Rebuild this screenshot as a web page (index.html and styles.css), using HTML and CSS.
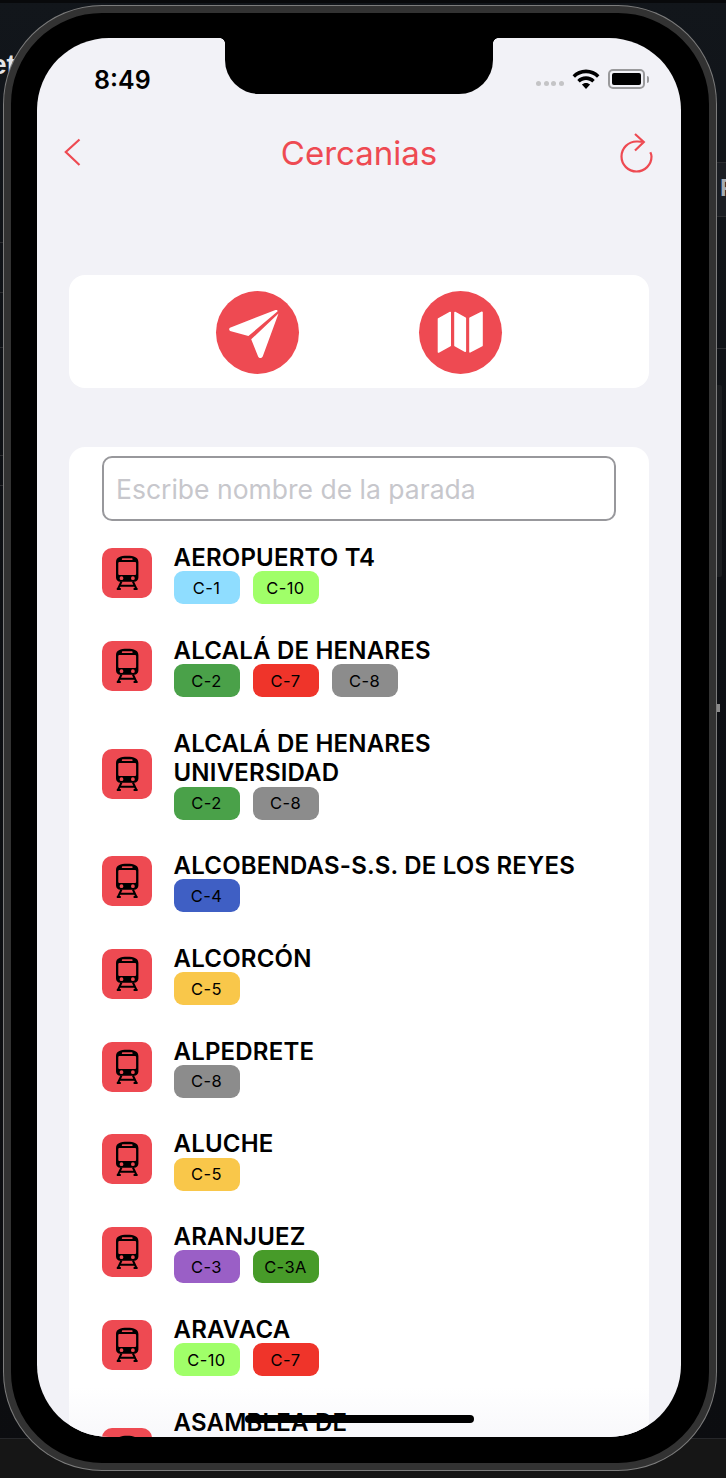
FILE: index.html
```html
<!DOCTYPE html>
<html lang="es">
<head>
<meta charset="utf-8">
<title>Cercanias</title>
<link rel="stylesheet" href="styles.css">
</head>
<body>
<svg class="defs" width="0" height="0" aria-hidden="true">
  <symbol id="train" viewBox="0 0 50 50">
    <path fill="#000" fill-rule="evenodd" d="M25.200 7.800c-7 0-11.200 1.700-11.200 6.200v15.500c0 2.500 1.900 4.300 4.300 4.300h13.800c2.400 0 4.300-1.800 4.300-4.300V14c0-4.500-4.200-6.200-11.200-6.200zM20.800 10.300h8.800c.6 0 1 .4 1 .9s-.4 .9-1 .9h-8.800c-.6 0-1-.4-1-.9s.4-.9 1-.9zM17.600 14h15.200c.8 0 1.300.5 1.300 1.300v10.400c0 .8-.5 1.300-1.300 1.300H17.600c-.8 0-1.300-.5-1.300-1.300V15.300c0-.8.500-1.300 1.300-1.300zM19.500 28.300a1.900 1.900 0 1 1 0 3.800 1.900 1.900 0 0 1 0-3.800zm11.400 0a1.900 1.900 0 1 1 0 3.800 1.900 1.900 0 0 1 0-3.800z"/>
    <path fill="none" stroke="#000" stroke-width="2" d="M19.500 33.500 15.800 41.200M30.900 33.500l3.700 7.700M17.500 37.800h15.400M14.800 41h4M31.600 41h4"/>
  </symbol>
</svg>
<div class="backdrop" aria-hidden="true">
  <span class="bg-text">et</span>
  <span class="bg-tab">P</span>
  <i class="rule rule-l1"></i><i class="rule rule-l2"></i><i class="rule rule-l3"></i><i class="rule rule-l4"></i><i class="rule rule-l5"></i>
  <i class="rule rule-r1"></i><i class="rule rule-r2"></i><i class="rule rule-r3"></i>
  <i class="side-box"></i><i class="side-tick"></i><i class="bottom-band"></i>
</div>
<div class="phone">
  <main class="screen">
    <div class="status">
      <span class="time">8:49</span>
      <div class="status-icons">
        <span class="dots"><i></i><i></i><i></i><i></i></span>
        <svg class="wifi" width="28" height="21" viewBox="1 1.500 26 19.500"><path d="M14 2C9 2 4.700 4 1.500 7.200l2.300 2.400C6.400 7 10 5.500 14 5.500s7.600 1.500 10.200 4.100l2.300-2.400C23.300 4 19 2 14 2zm0 6.300c-3.200 0-6 1.200-8.100 3.300l2.300 2.400c1.500-1.500 3.500-2.300 5.800-2.300s4.300.8 5.800 2.300l2.300-2.400C20 9.500 17.200 8.300 14 8.300zm0 6.200c-1.500 0-2.800.6-3.800 1.500l3.800 4 3.800-4c-1-.9-2.300-1.500-3.800-1.500z"/></svg>
        <span class="battery"><b></b></span><span class="battery-cap"></span>
      </div>
    </div>
    <header class="nav">
      <svg class="back" width="18" height="28" viewBox="0 0 18 28"><path d="M16.500 1.500 2.800 14 16.500 27"/></svg>
      <h1>Cercanias</h1>
      <svg class="reload" width="34" height="42" viewBox="0 0 34 42"><path d="M23.500 10C21 9.400 19 9.500 16.500 9.500A15 15 0 1 0 31.500 24.500c0-1.300-.6-3-1.200-4.200M15 2l8.800 8L15 18.500"/></svg>
    </header>
    <section class="card actions">
      <button class="round" aria-label="Ubicación">
        <svg width="83" height="83" viewBox="0 0 83 83"><path d="M58.800 19.300c2-.8 3.200.2 2.600 1.300L32.400 45.100 15 40.300c-2.400-.7-2.400-3.100-.4-3.900L58.800 19.300zM62.500 22.500 46.800 65.300c-.8 2.400-4.100 2.400-4.800 0L35.200 48.300 62.500 22.500z"/></svg>
      </button>
      <button class="round" aria-label="Mapa">
        <svg class="map" width="83" height="83" viewBox="0 0 83 83"><path d="M19.500 28 31.200 21.500v33L19.500 61zM36 21.500l10.300 5.800v33L36 54.500zM51 27.300l12-6v33.200L51 60.800z"/></svg>
      </button>
    </section>
    <section class="card list">
      <div class="search">Escribe nombre de la parada</div>
      <ul class="stops">
        <li class="stop"><span class="icon"><svg width="50" height="50"><use href="#train"/></svg></span><div><h2>AEROPUERTO T4</h2><p class="lines"><span class="line c1">C-1</span><span class="line c10">C-10</span></p></div></li>
        <li class="stop"><span class="icon"><svg width="50" height="50"><use href="#train"/></svg></span><div><h2>ALCALÁ DE HENARES</h2><p class="lines"><span class="line c2">C-2</span><span class="line c7">C-7</span><span class="line c8">C-8</span></p></div></li>
        <li class="stop"><span class="icon"><svg width="50" height="50"><use href="#train"/></svg></span><div><h2>ALCALÁ DE HENARES<br>UNIVERSIDAD</h2><p class="lines"><span class="line c2">C-2</span><span class="line c8">C-8</span></p></div></li>
        <li class="stop"><span class="icon"><svg width="50" height="50"><use href="#train"/></svg></span><div><h2>ALCOBENDAS-S.S. DE LOS REYES</h2><p class="lines"><span class="line c4">C-4</span></p></div></li>
        <li class="stop"><span class="icon"><svg width="50" height="50"><use href="#train"/></svg></span><div><h2>ALCORCÓN</h2><p class="lines"><span class="line c5">C-5</span></p></div></li>
        <li class="stop"><span class="icon"><svg width="50" height="50"><use href="#train"/></svg></span><div><h2>ALPEDRETE</h2><p class="lines"><span class="line c8">C-8</span></p></div></li>
        <li class="stop"><span class="icon"><svg width="50" height="50"><use href="#train"/></svg></span><div><h2>ALUCHE</h2><p class="lines"><span class="line c5">C-5</span></p></div></li>
        <li class="stop"><span class="icon"><svg width="50" height="50"><use href="#train"/></svg></span><div><h2>ARANJUEZ</h2><p class="lines"><span class="line c3">C-3</span><span class="line c3a">C-3A</span></p></div></li>
        <li class="stop"><span class="icon"><svg width="50" height="50"><use href="#train"/></svg></span><div><h2>ARAVACA</h2><p class="lines"><span class="line c10">C-10</span><span class="line c7">C-7</span></p></div></li>
        <li class="stop stop-last"><span class="icon"><svg width="50" height="50"><use href="#train"/></svg></span><div><h2>ASAMBLEA DE</h2></div></li>
      </ul>
    </section>
    <div class="home"></div>
  </main>
</div>
</body>
</html>
```
FILE: styles.css
```css
* { box-sizing: border-box; }
html, body { margin: 0; height: 1478px; overflow: hidden; }
body { position: relative; background: linear-gradient(#12161b, #0d0f13 40%, #0c0d10); padding: 6px 10px 8px 4px; font-family: Inter, "Liberation Sans", sans-serif; color: #000; }
.defs { position: absolute; }
.backdrop { position: absolute; inset: 0; overflow: hidden; }
.backdrop::before { content: ""; position: absolute; left: 0; right: 0; top: 0; height: 3px; background: #08090b; }
.bg-text { position: absolute; left: -9px; top: 48px; font: 700 28px/34px "Liberation Sans", sans-serif; color: #e4e4e6; }
.bg-tab { position: absolute; left: 717px; top: 162px; width: 20px; height: 55px; padding-left: 3px; background: #1a1d22; color: #a9adb2; font: 700 24px/52px "Liberation Sans", sans-serif; }
.rule { position: absolute; height: 1px; background: #2c2d30; }
.rule-l1, .rule-l2, .rule-l3, .rule-l4, .rule-l5 { left: 0; width: 5px; }
.rule-l1 { top: 242px; }
.rule-l2 { top: 292px; }
.rule-l3 { top: 347px; }
.rule-l4 { top: 455px; }
.rule-l5 { top: 485px; }
.rule-r1, .rule-r2, .rule-r3 { right: 0; width: 10px; }
.rule-r1 { top: 162px; }
.rule-r2 { top: 216px; }
.rule-r3 { top: 348px; }
.side-box { position: absolute; left: 717px; top: 385px; width: 5px; height: 192px; background: #1b1d20; border-radius: 0 2px 2px 0; }
.side-tick { position: absolute; left: 716px; top: 704px; width: 4px; height: 8px; background: #8a8a8a; }
.bottom-band { position: absolute; left: 0; right: 0; top: 1438px; height: 40px; background: #161616; border-top: 1px solid #26272a; }
.phone { position: relative; width: 712px; height: 1464px; background: #000; border-radius: 98px; border: 7px solid #323232; box-shadow: 0 0 0 1px #7c7c7c; padding: 25px 28px 26px 26px; }
.screen { position: relative; width: 644px; height: 1399px; background: #f2f2f7; border-radius: 72px; overflow: hidden; }
.screen::before { content: ""; position: absolute; left: 188px; top: 0; width: 268px; height: 56px; background: #000; border-radius: 0 0 34px 34px; }
.screen::after { content: ""; position: absolute; left: 183px; top: 0; width: 278px; height: 5px; background: radial-gradient(circle at 0 100%, transparent 4.500px, #000 5px) left top / 5px 5px no-repeat, radial-gradient(circle at 100% 100%, transparent 4.500px, #000 5px) right top / 5px 5px no-repeat; }
.status { height: 77px; position: relative; }
.time { position: absolute; left: 57px; top: 27px; font-size: 25px; font-weight: 580; line-height: 30px; }
.status-icons { position: absolute; left: 499px; top: 29px; display: flex; align-items: center; height: 24px; }
.dots { display: flex; gap: 2.500px; margin-top: 9px; margin-right: 8px; }
.dots i { width: 5px; height: 5px; border-radius: 50%; background: #c4c4c6; }
.wifi { margin-right: 8px; }
.battery { width: 37px; height: 20px; border: 2px solid #9a9a9c; border-radius: 5px; padding: 2px; display: block; }
.battery b { display: block; width: 100%; height: 100%; background: #000; border-radius: 2px; }
.battery-cap { width: 2px; height: 7px; background: #9a9a9c; margin-left: 2px; border-radius: 0 2px 2px 0; }
.nav { height: 78px; padding: 0 27px 0 26px; display: flex; align-items: flex-start; justify-content: space-between; position: relative; }
.nav h1 { position: absolute; left: 0; right: 0; top: 18px; margin: 0; text-align: center; color: #ee4a52; font-size: 33px; font-weight: 400; line-height: 40px; }
.back { margin-top: 23px; }
.reload { margin-top: 17px; }
.back path, .reload path { fill: none; stroke: #ee4a52; stroke-width: 2.200; }
.card { background: #fff; border-radius: 16px; margin: 0 32px; }
.actions { margin-top: 82px; height: 113px; padding-top: 2px; display: flex; align-items: center; justify-content: center; gap: 120px; }
.round { width: 83px; height: 83px; border: 0; padding: 0; border-radius: 50%; background: #ee4a52; display: flex; align-items: center; justify-content: center; }
.round svg { fill: #fff; }
.round .map path { stroke: #fff; stroke-width: 1.600; stroke-linejoin: round; }
.list { margin-top: 59px; padding: 9px 33px 0; height: 990px; background: linear-gradient(#fff calc(100% - 50px), #f8f8fb); overflow: hidden; }
.search { height: 65px; border: 2px solid #98989c; border-radius: 10px; padding: 0 12px; display: flex; align-items: center; font-size: 26.500px; color: #c7c7cc; }
.stops { list-style: none; margin: 21px 0 0; padding: 0; display: flex; flex-direction: column; gap: 30.500px; }
.stop { display: flex; align-items: center; gap: 21.500px; }
.stop-last { min-height: 93px; }
.stop-last > div { align-self: flex-start; }
.icon { width: 50px; height: 50px; border-radius: 10px; background: #ee4a52; display: flex; flex: none; }
.stop h2 { margin: 0 0 -1.500px; padding-top: 1px; font-size: 24px; font-weight: 580; letter-spacing: .2px; line-height: 29.750px; }
.lines { display: flex; gap: 13px; margin: 0; }
.line { width: 66px; height: 33px; border-radius: 9px; display: flex; align-items: center; justify-content: center; font-size: 16.500px; letter-spacing: .4px; }
.c1 { background: #8fddff; }
.c10 { background: #a0ff69; }
.c2 { background: #4aa149; }
.c7 { background: #ef342a; }
.c8 { background: #8c8c8c; }
.c4 { background: #3f5fc4; }
.c5 { background: #f9c74a; }
.c3 { background: #9a5fc6; }
.c3a { background: #479b29; }
.home { position: absolute; left: 208px; top: 1377px; width: 229px; height: 8px; background: #000; border-radius: 4px; }
```
